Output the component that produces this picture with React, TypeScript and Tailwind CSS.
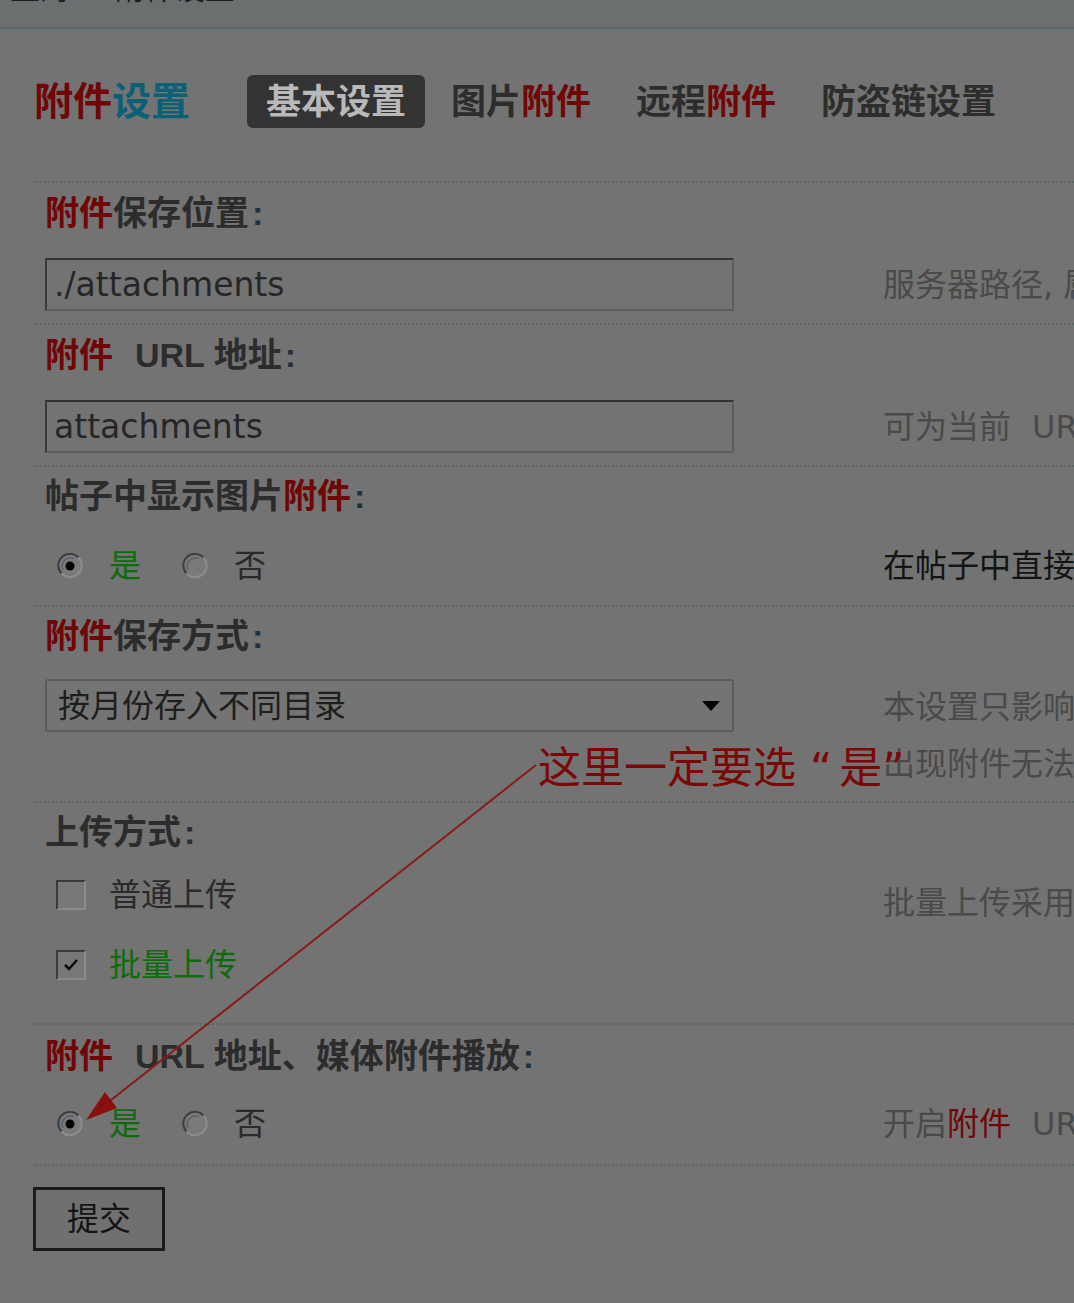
import React from "react";

const cjk = "font-['Liberation_Sans','Noto_Sans_CJK_SC',sans-serif]";
const dv = "font-['DejaVu_Sans','Noto_Sans_CJK_SC',sans-serif]";

const Red = ({ children }: { children: React.ReactNode }) => (
  <span className="text-[#700606]">{children}</span>
);

const Label = ({ children }: { children: React.ReactNode }) => (
  <div className={`${cjk} text-[34px] leading-[40px] font-bold text-[#2c2c2c] whitespace-nowrap`}>
    {children}
    <span className="ml-[3px] text-[#23303c]">:</span>
  </div>
);

const Desc = ({
  children,
  dark,
  tall,
}: {
  children: React.ReactNode;
  dark?: boolean;
  tall?: boolean;
}) => (
  <div
    className={`${dv} text-[32px] whitespace-nowrap ${tall ? "leading-[57px]" : "leading-[40px]"} ${
      dark ? "text-[#141414]" : "text-[#4a4a4a]"
    }`}
  >
    {children}
  </div>
);

const Radio = ({ checked }: { checked?: boolean }) => (
  <svg width="26" height="26" viewBox="0 0 26 26">
    <circle cx="13" cy="13" r="11" fill="#7a7a7a" />
    <path d="M4.5 20.5 A11 11 0 0 1 21.5 4.5" fill="none" stroke="#3e3e3e" strokeWidth="2" />
    <path d="M21.5 4.5 A11 11 0 0 1 4.5 20.5" fill="none" stroke="#8c8c8c" strokeWidth="2" />
    <path d="M6 17 A8.5 8.5 0 0 1 17 5.5" fill="none" stroke="#556272" strokeWidth="1.5" />
    {checked && <circle cx="13" cy="13" r="4.5" fill="#050505" />}
  </svg>
);

const Check = ({ checked }: { checked?: boolean }) => (
  <div className="w-[30px] h-[30px] border-t-2 border-l-2 border-t-[#3a3a3a] border-l-[#3a3a3a] border-r-2 border-b-2 border-r-[#8a8a8a] border-b-[#8a8a8a] bg-[#777777] flex items-center justify-center">
    {checked && (
      <svg width="18" height="16" viewBox="0 0 18 16">
        <path d="M3 8 L7 12 L15 3" fill="none" stroke="#0a0a0a" strokeWidth="2.5" />
      </svg>
    )}
  </div>
);

const YesNo = () => (
  <div className="flex items-center pl-[12px] h-[40px]">
    <Radio checked />
    <span className={`${dv} ml-[26px] text-[32px] text-[#0c6c0c]`}>是</span>
    <span className="ml-[41px] flex">
      <Radio />
    </span>
    <span className={`${dv} ml-[26px] text-[32px] text-[#2a2a2a]`}>否</span>
  </div>
);

const TextBox = ({ value }: { value: string }) => (
  <div
    className={`${dv} w-[689px] h-[53px] border-2 border-t-[#333333] border-l-[#3a3a3a] border-r-[#5e5e5e] border-b-[#5e5e5e] bg-[#737373] flex items-center pl-[7px] text-[33px] text-[#262626]`}
  >
    {value}
  </div>
);

const Section = ({ children, className }: { children: React.ReactNode; className?: string }) => (
  <div className={`border-t-2 border-dotted border-[#59686a] pl-[12px] ${className ?? ""}`}>{children}</div>
);

export default function App() {
  return (
    <div className="relative w-[1074px] min-h-[1303px] overflow-hidden bg-[#737373]">
      <div className="h-[29px] overflow-hidden bg-[#6c6f6f] border-b-2 border-[#5b696b]">
        <div className={`${cjk} -mt-[27px] pl-[10px] text-[30px] leading-[32px] text-[#1e1e1e] whitespace-nowrap`}>
          上海<span className="px-[14px]">»</span>附件设置
        </div>
      </div>

      <div className="pl-[33px]">
        <div className="mt-[46px] h-[53px] flex items-center">
          <div className={`${cjk} ml-[1px] text-[39px] font-bold leading-[53px]`}>
            <span className="text-[#700606]">附件</span>
            <span className="text-[#0c6076]">设置</span>
          </div>
          <div className={`${cjk} ml-[57px] flex gap-[7px] text-[35px] font-bold leading-[53px]`}>
            <div className="px-[19px] h-[53px] rounded-[6px] bg-[#333333] text-[#b9b9b9]">基本设置</div>
            <div className="px-[19px] text-[#2d2d2d]">
              图片<Red>附件</Red>
            </div>
            <div className="px-[19px] text-[#2d2d2d]">
              远程<Red>附件</Red>
            </div>
            <div className="px-[19px] text-[#2d2d2d]">防盗链设置</div>
          </div>
        </div>

        <div className="mt-[53px]">
          <Section className="pt-[10px] pb-[12px]">
            <Label>
              <Red>附件</Red>保存位置
            </Label>
            <div className="mt-[25px] h-[53px] flex items-center">
              <div className="w-[838px] shrink-0">
                <TextBox value="./attachments" />
              </div>
              <Desc>服务器路径, 属性 777, 必须为 web 可访问到的目录</Desc>
            </div>
          </Section>

          <Section className="pt-[10px] pb-[12px]">
            <Label>
              <Red>附件</Red>
              <span className="ml-[22px]">URL</span> 地址
            </Label>
            <div className="mt-[25px] h-[53px] flex items-center">
              <div className="w-[838px] shrink-0">
                <TextBox value="attachments" />
              </div>
              <Desc>
                可为当前<span className="ml-[21px]">URL 下的相对地址或 http:// 开头的绝对地址</span>
              </Desc>
            </div>
          </Section>

          <Section className="pt-[9px] pb-[19px]">
            <Label>
              帖子中显示图片<Red>附件</Red>
            </Label>
            <div className="mt-[30px] h-[40px] flex items-center">
              <div className="w-[838px] shrink-0">
                <YesNo />
              </div>
              <Desc dark>在帖子中直接显示图片附件, 而不需要点击附件链接</Desc>
            </div>
          </Section>

          <Section className="pt-[9px] pb-[8px]">
            <Label>
              <Red>附件</Red>保存方式
            </Label>
            <div className="mt-[23px] h-[114px] flex items-start">
              <div className="w-[838px] shrink-0">
                <div
                  className={`${dv} w-[689px] h-[53px] rounded-[3px] border-2 border-[#5c5c5c] bg-[#747474] flex items-center justify-between pl-[11px] pr-[11px] text-[32px] text-[#1e1e1e]`}
                >
                  <span>按月份存入不同目录</span>
                  <svg width="20" height="12" viewBox="0 0 20 12">
                    <path d="M1 1 L19 1 L10 11 Z" fill="#050505" />
                  </svg>
                </div>
              </div>
              <Desc tall>
                本设置只影响新上传的附件, 设置更改之前的附件仍存放在原来位置
                <br />
                出现附件无法上传的情况
              </Desc>
            </div>
          </Section>

          <Section className="pt-[9px] pb-[38px]">
            <Label>上传方式</Label>
            <div className="mt-[23px] h-[110px] flex items-start">
              <div className="w-[838px] shrink-0 flex flex-col gap-[30px] pl-[11px]">
                <div className="h-[40px] flex items-center">
                  <Check />
                  <span className={`${dv} ml-[23px] text-[32px] text-[#2a2a2a]`}>普通上传</span>
                </div>
                <div className="h-[40px] flex items-center">
                  <Check checked />
                  <span className={`${dv} ml-[23px] text-[32px] text-[#0c6c0c]`}>批量上传</span>
                </div>
              </div>
              <Desc tall>批量上传采用 Flash 组件, 可以一次选择多个文件</Desc>
            </div>
          </Section>

          <Section className="pt-[11px] pb-[20px] border-b-2">
            <Label>
              <Red>附件</Red>
              <span className="ml-[22px]">URL</span> 地址、媒体附件播放
            </Label>
            <div className="mt-[28px] h-[40px] flex items-center">
              <div className="w-[838px] shrink-0">
                <YesNo />
              </div>
              <Desc>
                开启<Red>附件</Red>
                <span className="ml-[21px]">URL 地址后, 媒体附件可以直接播放</span>
              </Desc>
            </div>
          </Section>
        </div>

        <button
          className={`${dv} mt-[21px] w-[132px] h-[64px] border-[3px] border-[#1b1b1b] bg-[#707070] text-[32px] text-[#141414]`}
        >
          提交
        </button>
      </div>

      <div
        className={`${dv} absolute left-[538px] top-[744px] text-[43px] leading-[48px] text-[#7c0707] whitespace-nowrap`}
      >
        这里一定要选<span className="ml-[14px]">“</span>
        <span className="ml-[7px]">是”</span>
      </div>

      <svg className="absolute left-0 top-0 pointer-events-none" width="1074" height="1303">
        <line x1="536" y1="765" x2="106" y2="1104" stroke="#8a1a1a" strokeWidth="2" />
        <polygon points="86,1120 117,1108 105,1092" fill="#8a1010" />
      </svg>
    </div>
  );
}
